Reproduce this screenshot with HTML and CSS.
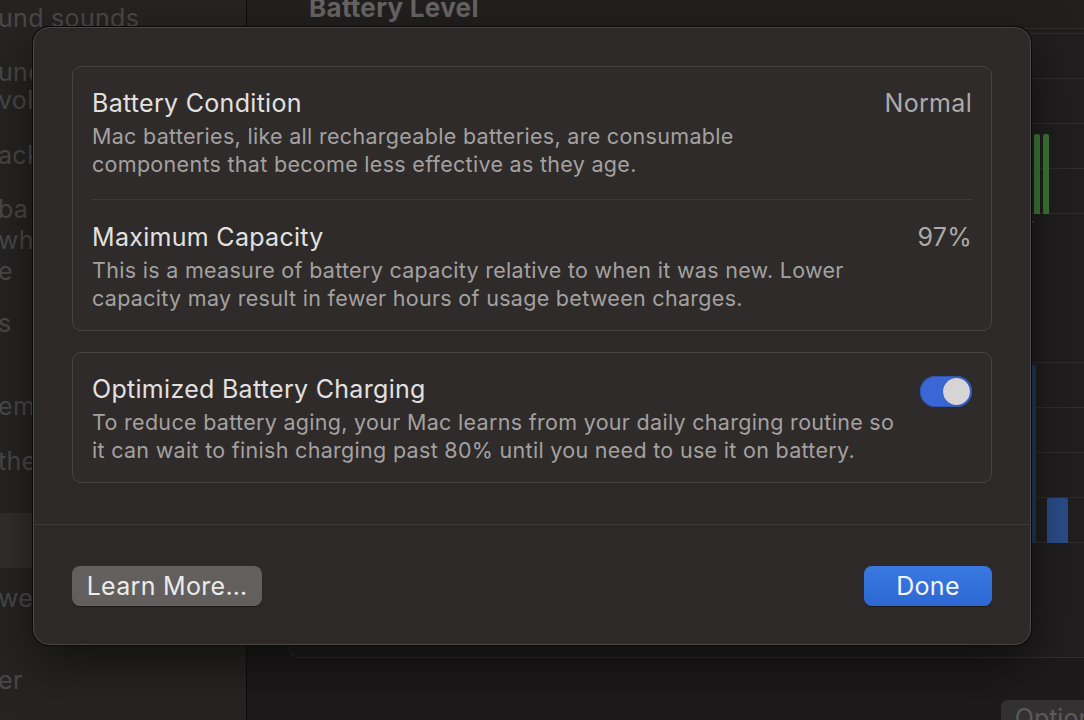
FILE: index.html
```html
<!DOCTYPE html>
<html lang="en">
<head>
<meta charset="utf-8">
<title>Battery Health</title>
<link rel="stylesheet" href="styles.css">
</head>
<body>
<div class="window">
  <aside class="sidebar">
    <div class="side-item s1">und sounds</div>
    <div class="side-item s2">und<br>volume</div>
    <div class="side-item s3">ack</div>
    <div class="side-item s4">ba<br>whe<br>e</div>
    <div class="side-item s5">s</div>
    <div class="side-item s6">ems</div>
    <div class="side-item s7">the</div>
    <div class="side-item side-selected"></div>
    <div class="side-item s8">wer</div>
    <div class="side-item s9">er</div>
  </aside>
  <main class="content">
    <h2 class="heading">Battery Level</h2>
    <section class="panel">
      <div class="chart chart-top">
        <div class="bars">
          <div class="bar green" style="margin-left:725px;width:6px;height:80px"></div>
          <div class="bar green" style="margin-left:3px;width:6px;height:80px"></div>
        </div>
      </div>
      <div class="chart-label">·</div>
      <div class="chart chart-bottom">
        <div class="bars">
          <div class="bar blue-dim" style="margin-left:722px;width:5px;height:178px"></div>
          <div class="bar blue" style="margin-left:11px;width:21px;height:45px"></div>
        </div>
      </div>
    </section>
    <div class="options-row"><button class="options-btn">Options…</button></div>
  </main>
</div>

<div class="sheet">
  <div class="sheet-body">
    <div class="group">
      <div class="row">
        <div class="row-text">
          <div class="row-title">Battery Condition</div>
          <div class="row-desc">Mac batteries, like all rechargeable batteries, are consumable<br>components that become less effective as they age.</div>
        </div>
        <div class="row-value">Normal</div>
      </div>
      <div class="divider"></div>
      <div class="row">
        <div class="row-text">
          <div class="row-title">Maximum Capacity</div>
          <div class="row-desc">This is a measure of battery capacity relative to when it was new. Lower<br>capacity may result in fewer hours of usage between charges.</div>
        </div>
        <div class="row-value">97%</div>
      </div>
    </div>
    <div class="group">
      <div class="row">
        <div class="row-text">
          <div class="row-title">Optimized Battery Charging</div>
          <div class="row-desc">To reduce battery aging, your Mac learns from your daily charging routine so<br>it can wait to finish charging past 80% until you need to use it on battery.</div>
        </div>
        <div class="toggle on"><div class="knob"></div></div>
      </div>
    </div>
  </div>
  <div class="sheet-footer">
    <button class="btn btn-secondary">Learn More…</button>
    <button class="btn btn-primary">Done</button>
  </div>
</div>
</body>
</html>
```
FILE: styles.css
```css
* { box-sizing: border-box; }
html, body {
  margin: 0;
  padding: 0;
  width: 1084px;
  height: 720px;
  overflow: hidden;
  background: #1d1b1b;
  font-family: Inter, "Noto Sans", "Liberation Sans", sans-serif;
}

/* ---------- background window (dimmed) ---------- */
.window {
  display: grid;
  grid-template-columns: 246px 1px 1fr;
  height: 720px;
}
.window::before {
  content: "";
  grid-column: 2;
  grid-row: 1;
  background: #0e0d0d;
}
.sidebar {
  grid-column: 1;
  grid-row: 1;
  background: #262423;
  display: flex;
  flex-direction: column;
  color: #4b4948;
  font-size: 25px;
  line-height: 28px;
  letter-spacing: 0.3px;
  overflow: hidden;
  white-space: nowrap;
}
.side-item { flex-shrink: 0; margin-left: -2px; }
.s1 { margin-top: 4px; }
.s2 { margin-top: 26px; }
.s3 { margin-top: 27px; }
.s4 { margin-top: 25px; line-height: 31px; }
.s5 { margin-top: 22px; }
.s6 { margin-top: 55px; }
.s7 { margin-top: 27px; }
.side-selected { margin-top: 38px; height: 55px; background: #312f2e; margin-left: 0; }
.s8 { margin-top: 16px; }
.s9 { margin-top: 54px; }

.content {
  grid-column: 3;
  grid-row: 1;
  background: linear-gradient(180deg, #221f1f 0%, #1e1c1c 60%, #1c1a1a 100%);
  display: flex;
  flex-direction: column;
  padding-left: 42px;
  overflow: hidden;
}
.heading {
  flex-shrink: 0;
  margin: -6px 0 0 20px;
  font-size: 26px;
  line-height: 28px;
  font-weight: 700;
  letter-spacing: 0.3px;
  color: #666464;
}
.panel {
  flex-shrink: 0;
  margin-top: 6px;
  height: 630px;
  border: 1px solid #312f2f;
  border-right: none;
  border-radius: 10px 0 0 10px;
  background: #201e1e;
  padding: 4px 0 0 19px;
  display: flex;
  flex-direction: column;
  margin-right: -20px;
}
.chart {
  flex-shrink: 0;
  height: 181px;
  background: repeating-linear-gradient(180deg, #302e2e 0 1px, transparent 1px 45px);
  display: flex;
  flex-direction: column;
  justify-content: flex-end;
}
.chart-bottom { margin-top: 128px; }
.bars {
  display: flex;
  align-items: flex-end;
  height: 100%;
}
.bar { border-radius: 2px 2px 0 0; }
.bar.green { background: #3f7a36; }
.bar.blue { background: #2a4d8a; }
.bar.blue-dim { background: #22375c; }
.chart-label {
  flex-shrink: 0;
  height: 20px;
  color: #5a5858;
  font-size: 12px;
  padding-left: 722px;
}
.options-row {
  flex-shrink: 0;
  display: flex;
  justify-content: flex-end;
  margin-top: 42px;
  margin-right: -58px;
}
.options-btn {
  font-family: inherit;
  font-size: 25px;
  line-height: 30px;
  height: 36px;
  padding: 2px 14px;
  border: none;
  border-radius: 7px;
  background: #333131;
  color: #5c5a5a;
}

/* ---------- sheet ---------- */
.sheet {
  position: absolute;
  left: 33px;
  top: 27px;
  width: 998px;
  height: 618px;
  background: #2c2928;
  border: 1px solid #4a4746;
  border-radius: 16px;
  box-shadow: 0 0 0 1px #0b0a0a, 0 18px 50px rgba(0, 0, 0, 0.55);
  display: flex;
  flex-direction: column;
}
.sheet-body {
  padding: 38px 38px 41px;
  display: flex;
  flex-direction: column;
  gap: 21px;
}
.group {
  background: #2e2b2a;
  border: 1px solid #464342;
  border-radius: 9px;
}
.row {
  display: flex;
  justify-content: space-between;
  align-items: flex-start;
  padding: 21px 19px 18px 19px;
}
.divider {
  height: 1px;
  background: #3d3a39;
  margin: 3px 19px 1px;
}
.row-title {
  font-size: 25px;
  line-height: 30px;
  letter-spacing: 0.3px;
  color: #e3e1e0;
}
.row-desc {
  margin-top: 4px;
  font-size: 21.5px;
  line-height: 28px;
  letter-spacing: 0.3px;
  color: #a4a1a0;
  white-space: nowrap;
}
.row-value {
  font-size: 25px;
  line-height: 30px;
  letter-spacing: 0.3px;
  color: #adaaa9;
}
.toggle {
  flex-shrink: 0;
  margin-top: 2px;
  width: 52px;
  height: 31px;
  border-radius: 16px;
  background: #3a67d5;
  box-shadow: inset 0 0 0 1px #2f55b0;
  display: flex;
  align-items: center;
  justify-content: flex-end;
  padding: 2px;
}
.knob {
  width: 27px;
  height: 27px;
  border-radius: 50%;
  background: #d6d4d5;
  box-shadow: 0 0 1px rgba(0,0,0,0.4);
}
.sheet-footer {
  border-top: 1px solid #3e3b3a;
  padding: 41px 38px 38px;
  display: flex;
  justify-content: space-between;
}
.btn {
  font-family: inherit;
  font-size: 25px;
  line-height: 30px;
  letter-spacing: 0.3px;
  height: 40px;
  border: none;
  border-radius: 8px;
  padding: 0;
}
.btn-secondary {
  width: 190px;
  background: #625f5e;
  color: #ecebea;
  box-shadow: 0 1px 1px rgba(0,0,0,0.3);
}
.btn-primary {
  width: 128px;
  background: linear-gradient(180deg, #3a79e2 0%, #2d68d3 100%);
  color: #f2f5fb;
  box-shadow: 0 1px 1px rgba(0,0,0,0.3);
}
```
